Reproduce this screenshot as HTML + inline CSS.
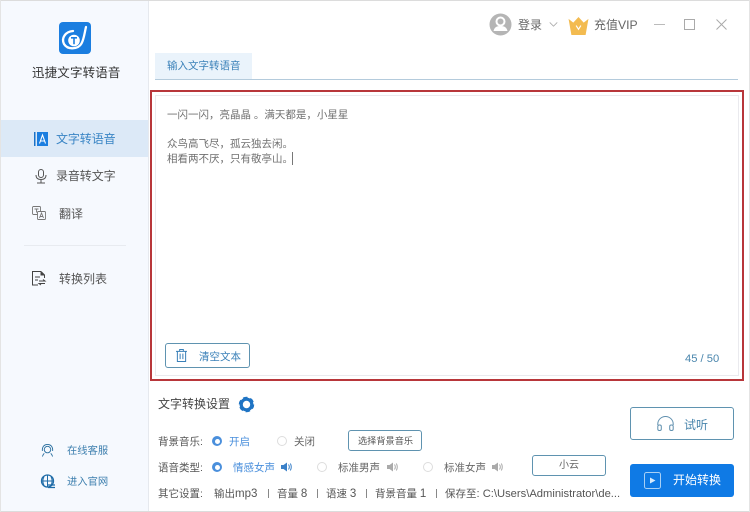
<!DOCTYPE html>
<html lang="zh">
<head>
<meta charset="utf-8">
<style>
*{box-sizing:border-box;margin:0;padding:0}
html,body{width:750px;height:512px;overflow:hidden;background:#fff}
body{font-family:"Liberation Sans","Noto Sans CJK SC",sans-serif;color:#555;position:relative}
body>*{filter:blur(.25px)}
.t{position:absolute;white-space:nowrap;line-height:14px}
.t b{font-weight:400;font-size:11.500px}
svg{position:absolute;overflow:visible}
.btn{position:absolute;border:1px solid #5f93b0;border-radius:3px;background:#fff}
.radio{position:absolute;width:10px;height:10px;border-radius:50%;background:#fff;border:1px solid #ddd}
.on{border:none;background:#4a8fdc}
.on:after{content:"";position:absolute;left:2.500px;top:2.500px;width:5px;height:5px;border-radius:50%;background:#fff}
</style>
</head>
<body>
<div style="position:absolute;left:0;top:0;width:750px;height:1px;background:#dcdcdc"></div>
<div style="position:absolute;left:0;top:511px;width:750px;height:1px;background:#dcdcdc"></div>
<div style="position:absolute;left:0;top:0;width:1px;height:512px;background:#e4e4e4"></div>
<div style="position:absolute;left:749px;top:0;width:1px;height:512px;background:#e4e4e4"></div>
<div style="position:absolute;left:1px;top:1px;width:148px;height:510px;background:#f6f9fe;border-right:1px solid #e6e9ee"></div>

<svg style="left:59px;top:22px" width="32" height="32" viewBox="0 0 32 32">
<rect width="32" height="32" rx="4" fill="#1b7ee0"/>
<path d="M27 5C25.500 11 25 17 22.500 21.500C19.500 27 9 28.500 5 22C2 16 6.500 9.500 14 9" fill="none" stroke="#fff" stroke-width="2.300" stroke-linecap="round"/>
<circle cx="15" cy="18.500" r="5.800" fill="#fff"/>
<path d="M12 15.800h6M15 15.800v6.500" stroke="#1b7ee0" stroke-width="1.600" fill="none"/>
</svg>
<div class="t" style="left:32px;top:66px;font-size:12.500px;color:#333;letter-spacing:.15px">迅捷文字转语音</div>

<div style="position:absolute;left:1px;top:120px;width:147px;height:37px;background:#dce9f7"></div>
<svg style="left:34px;top:132px" width="14" height="14" viewBox="0 0 14 14">
<rect x="0" y="0" width="1.500" height="14" fill="#1b73c9"/><rect x="3" y="0" width="11" height="14" fill="#1b7ee0"/>
<path d="M5.500 11.500L8.500 3L11.500 11.500M6.500 9h4" stroke="#fff" fill="none" stroke-width="1.100"/>
</svg>
<div class="t" style="left:56px;top:132px;font-size:12px;color:#3a85c5;letter-spacing:-.1px">文字转语音</div>

<svg style="left:35px;top:169px" width="12" height="15" viewBox="0 0 12 15" fill="none" stroke="#555" stroke-width="1">
<rect x="3.500" y="0.500" width="5" height="8" rx="2.500"/><path d="M1 6c0 3 2 4.500 5 4.500s5-1.500 5-4.500M6 10.500v3M2 14h8"/>
</svg>
<div class="t" style="left:56px;top:169px;font-size:12px;color:#555;letter-spacing:-.1px">录音转文字</div>

<svg style="left:32px;top:206px" width="14" height="14" viewBox="0 0 14 14" fill="none" stroke="#777" stroke-width=".9">
<rect x="0.500" y="0.500" width="8" height="8" rx="1"/><path d="M2.500 3h4M4.500 3v3.500"/><rect x="5.500" y="5.500" width="8" height="8" rx="1" fill="#f6f9fe"/><path d="M7.500 12l2-5 2 5M8.200 10.500h2.600"/>
</svg>
<div class="t" style="left:59px;top:207px;font-size:12px;color:#555">翻译</div>

<div style="position:absolute;left:24px;top:245px;width:102px;height:1px;background:#e8ebf0"></div>

<svg style="left:32px;top:271px" width="14" height="15" viewBox="0 0 14 15" fill="none" stroke="#444" stroke-width="1">
<path d="M9 .500H.500V14H6M9 .500L12.500 4V7"/><path d="M9 .500V4h3.500" fill="#444"/><path d="M3 6h5M3 9h3M7 10h6l-2-1.500M13 12.500H7l2 1.500"/>
</svg>
<div class="t" style="left:59px;top:272px;font-size:12px;color:#555">转换列表</div>

<svg style="left:41px;top:444px" width="13" height="13" viewBox="0 0 14 14" fill="none" stroke="#2a6f9f" stroke-width="1">
<circle cx="7" cy="6" r="3.500"/><path d="M1.500 7.500C1 2.500 4 .500 7 .500s6 2 5.500 7M3.500 10c-1 1-1.500 2-2 3.500M10.500 10c1 1 1.500 2 2 3.500"/>
</svg>
<div class="t" style="left:67px;top:445px;font-size:10.300px;color:#3d7fae">在线客服</div>
<svg style="left:41px;top:474px" width="14" height="15" viewBox="0 0 14 15" fill="none" stroke="#1f6ca8" stroke-width="1">
<circle cx="6.500" cy="7" r="6" stroke-width="1.300"/><path d="M.500 7h12M6.500 1v12M3 2.500c-1.500 3-1.500 6 0 9M10 2.500c1.500 3 1.500 6 0 9"/><path d="M7 11h7M7 13.500h7" stroke-width="1.200"/>
</svg>
<div class="t" style="left:67px;top:476px;font-size:10.300px;color:#3d7fae">进入官网</div>

<svg style="left:489px;top:13px" width="23" height="23" viewBox="0 0 23 23">
<circle cx="11.500" cy="11.500" r="11" fill="#b5b5b5"/><circle cx="11.500" cy="8.500" r="4" fill="none" stroke="#fff" stroke-width="2"/><path d="M4.500 18c1-4 3.500-5 7-5s6 1 7 5z" fill="#fff"/>
</svg>
<div class="t" style="left:518px;top:18px;font-size:12px;color:#666">登录</div>
<svg style="left:549px;top:22px" width="9" height="5" viewBox="0 0 10 6"><path d="M.5.500L5 5 9.500.500" fill="none" stroke="#aaa"/></svg>
<svg style="left:568px;top:17px" width="21" height="18" viewBox="0 0 21 19">
<path d="M0 2L5 6L10.500 0L16 6L21 2L18 19H3z" fill="#f3bb50"/><path d="M8 9l2.500 4L13 9" fill="none" stroke="#fff" stroke-width="1.200"/>
</svg>
<div class="t" style="left:594px;top:18px;font-size:12px;color:#666">充值<span style="font-size:12.200px">VIP</span></div>
<div style="position:absolute;left:654px;top:24px;width:11px;height:1px;background:#bbb"></div>
<div style="position:absolute;left:684px;top:19px;width:11px;height:11px;border:1px solid #aaa"></div>
<svg style="left:716px;top:19px" width="11" height="11" viewBox="0 0 11 11"><path d="M.5.500l10 10M10.500.500l-10 10" stroke="#aaa" fill="none"/></svg>

<div style="position:absolute;left:155px;top:53px;width:97px;height:26px;background:#eaf3fb"></div>
<div class="t" style="left:167px;top:59px;font-size:10.500px;color:#3a80b8">输入文字转语音</div>
<div style="position:absolute;left:155px;top:79px;width:583px;height:1px;background:#b4cbdc"></div>

<div style="position:absolute;left:150px;top:90px;width:594px;height:291px;border:2px solid #b8363a;background:#fff">
<div style="position:absolute;left:3px;top:3px;right:3px;bottom:3px;border:1px solid #eaeaee"></div>
</div>
<div class="t" style="left:167px;top:108px;font-size:10.500px;color:#707070">一闪一闪，亮晶晶 。满天都是，小星星</div>
<div class="t" style="left:167px;top:137px;font-size:10.500px;color:#707070">众鸟高飞尽，孤云独去闲。</div>
<div class="t" style="left:167px;top:152px;font-size:10.500px;color:#707070">相看两不厌，只有敬亭山。</div>
<div style="position:absolute;left:292px;top:152px;width:1px;height:13px;background:#777"></div>

<div class="btn" style="left:165px;top:343px;width:85px;height:25px"></div>
<svg style="left:176px;top:349px" width="11" height="13" viewBox="0 0 12 14" fill="none" stroke="#3a80b8" stroke-width="1.100">
<path d="M0 2.500h12M4 2.500V.5h4v2M1.500 2.500V13.500h9V2.500M4.500 5v6M7.500 5v6"/>
</svg>
<div class="t" style="left:199px;top:350px;font-size:10.500px;color:#3a80b8">清空文本</div>
<div class="t" style="left:685px;top:352px;font-size:11.200px;color:#4a86ad">45 / 50</div>

<div class="t" style="left:158px;top:397px;font-size:12px;color:#444">文字转换设置</div>
<svg style="left:238px;top:396px" width="17" height="17" viewBox="0 0 17 17">
<circle cx="8.500" cy="8.500" r="5.300" fill="none" stroke="#1f74c4" stroke-width="3.200"/><circle cx="8.500" cy="8.500" r="7" fill="none" stroke="#1f74c4" stroke-width="1.500" stroke-dasharray="4.500 2.830"/>
</svg>

<div class="t" style="left:158px;top:435px;font-size:10.500px;color:#555">背景音乐:</div>
<div class="radio on" style="left:212px;top:436px"></div>
<div class="t" style="left:229px;top:435px;font-size:10.500px;color:#4a8fdc">开启</div>
<div class="radio" style="left:277px;top:436px"></div>
<div class="t" style="left:294px;top:435px;font-size:10.500px;color:#666">关闭</div>
<div class="btn" style="left:348px;top:430px;width:74px;height:21px"></div>
<div class="t" style="left:358px;top:434px;font-size:9.200px;color:#555">选择背景音乐</div>

<div class="t" style="left:158px;top:461px;font-size:10.500px;color:#555">语音类型:</div>
<div class="radio on" style="left:212px;top:462px"></div>
<div class="t" style="left:233px;top:461px;font-size:10.500px;color:#4a8fdc">情感女声</div>
<svg style="left:281px;top:462px" width="11" height="10" viewBox="0 0 11 10"><path d="M0 3h2.500L6 .5v9L2.500 7H0z" fill="#3a80c8"/><path d="M7.500 2.500c1 1.500 1 3.500 0 5M9.300 1.500c1.300 2 1.300 5 0 7" fill="none" stroke="#3a80c8"/></svg>
<div class="radio" style="left:317px;top:462px"></div>
<div class="t" style="left:338px;top:461px;font-size:10.500px;color:#666">标准男声</div>
<svg style="left:387px;top:462px" width="11" height="10" viewBox="0 0 11 10"><path d="M0 3h2.500L6 .5v9L2.500 7H0z" fill="#aaa"/><path d="M7.500 2.500c1 1.500 1 3.500 0 5M9.300 1.500c1.300 2 1.300 5 0 7" fill="none" stroke="#aaa"/></svg>
<div class="radio" style="left:423px;top:462px"></div>
<div class="t" style="left:444px;top:461px;font-size:10.500px;color:#666">标准女声</div>
<svg style="left:492px;top:462px" width="11" height="10" viewBox="0 0 11 10"><path d="M0 3h2.500L6 .5v9L2.500 7H0z" fill="#aaa"/><path d="M7.500 2.500c1 1.500 1 3.500 0 5M9.300 1.500c1.300 2 1.300 5 0 7" fill="none" stroke="#aaa"/></svg>
<div class="btn" style="left:532px;top:455px;width:74px;height:21px"></div>
<div class="t" style="left:559px;top:459px;font-size:10px;color:#666">小云</div>

<div class="t" style="left:158px;top:487px;font-size:10.500px;color:#555">其它设置:</div>
<div class="t" style="left:214px;top:487px;font-size:10.500px;color:#555">输出<b>mp3</b></div>
<div style="position:absolute;left:268px;top:489px;width:1px;height:9px;background:#888"></div>
<div class="t" style="left:277px;top:487px;font-size:10.500px;color:#555">音量 <b>8</b></div>
<div style="position:absolute;left:317px;top:489px;width:1px;height:9px;background:#888"></div>
<div class="t" style="left:326px;top:487px;font-size:10.500px;color:#555">语速 <b>3</b></div>
<div style="position:absolute;left:366px;top:489px;width:1px;height:9px;background:#888"></div>
<div class="t" style="left:375px;top:487px;font-size:10.500px;color:#555">背景音量 <b>1</b></div>
<div style="position:absolute;left:436px;top:489px;width:1px;height:9px;background:#888"></div>
<div class="t" style="left:445px;top:487px;font-size:10.500px;color:#555">保存至<b style="font-size:11.200px">: C:\Users\Administrator\de...</b></div>

<div class="btn" style="left:630px;top:407px;width:104px;height:33px"></div>
<svg style="left:657px;top:416px" width="17" height="15" viewBox="0 0 17 15" fill="none" stroke="#5f8fae" stroke-width="1">
<path d="M.8 9V8a7.700 7.500 0 0 1 15.400 0v1"/><rect x=".8" y="9" width="3.500" height="5.500" rx="1.500"/><rect x="12.700" y="9" width="3.500" height="5.500" rx="1.500"/>
</svg>
<div class="t" style="left:684px;top:418px;font-size:12px;color:#4a86ad">试听</div>

<div style="position:absolute;left:630px;top:464px;width:104px;height:33px;background:#0f7ae5;border-radius:3px"></div>
<svg style="left:644px;top:472px" width="17" height="17" viewBox="0 0 17 17" fill="none" stroke="#a8d0f5" stroke-width="1">
<rect x=".5" y=".5" width="16" height="16" rx="2"/><path d="M6 5.500l5.500 3L6 11.500z" fill="#d8ebfc" stroke="none"/>
</svg>
<div class="t" style="left:673px;top:473px;font-size:12px;color:#fff">开始转换</div>
</body>
</html>
